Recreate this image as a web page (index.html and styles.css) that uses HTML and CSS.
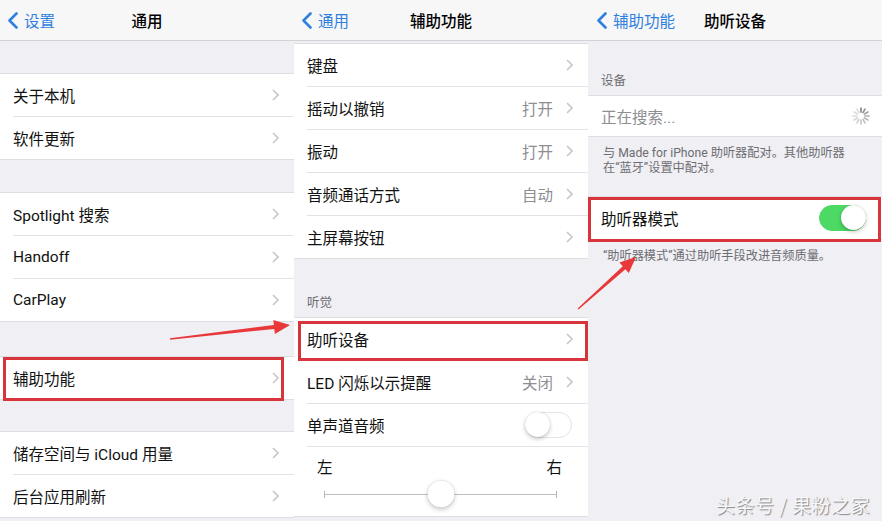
FILE: index.html
```html
<!DOCTYPE html>
<html lang="zh-CN">
<head>
<meta charset="utf-8">
<title>辅助功能</title>
<link rel="stylesheet" href="styles.css">
</head>
<body>
<div class="screen">
  <section class="panel">
    <header class="nav">
      <div class="back"><svg viewBox="0 0 11 17"><path d="M9.5 1.5 L2.5 8.5 L9.5 15.5" fill="none" stroke="#2f80de" stroke-width="2.6" stroke-linecap="round" stroke-linejoin="round"/></svg><span>设置</span></div>
      <div class="title">通用</div>
      <div></div>
    </header>
    <ul class="group mt33">
      <li class="row"><div class="cell"><span class="label">关于本机</span><svg class="chev" viewBox="0 0 7 12"><path d="M1 1 L6 6 L1 11" fill="none" stroke="#c7c7cc" stroke-width="1.6"/></svg></div></li>
      <li class="row"><div class="cell"><span class="label">软件更新</span><svg class="chev" viewBox="0 0 7 12"><path d="M1 1 L6 6 L1 11" fill="none" stroke="#c7c7cc" stroke-width="1.6"/></svg></div></li>
    </ul>
    <ul class="group mt34">
      <li class="row"><div class="cell"><span class="label">Spotlight 搜索</span><svg class="chev" viewBox="0 0 7 12"><path d="M1 1 L6 6 L1 11" fill="none" stroke="#c7c7cc" stroke-width="1.6"/></svg></div></li>
      <li class="row"><div class="cell"><span class="label">Handoff</span><svg class="chev" viewBox="0 0 7 12"><path d="M1 1 L6 6 L1 11" fill="none" stroke="#c7c7cc" stroke-width="1.6"/></svg></div></li>
      <li class="row"><div class="cell"><span class="label">CarPlay</span><svg class="chev" viewBox="0 0 7 12"><path d="M1 1 L6 6 L1 11" fill="none" stroke="#c7c7cc" stroke-width="1.6"/></svg></div></li>
    </ul>
    <ul class="group mt36">
      <li class="row hl hl-a"><div class="cell"><span class="label">辅助功能</span><svg class="chev" viewBox="0 0 7 12"><path d="M1 1 L6 6 L1 11" fill="none" stroke="#c7c7cc" stroke-width="1.6"/></svg></div></li>
    </ul>
    <ul class="group mt33">
      <li class="row"><div class="cell"><span class="label">储存空间与 iCloud 用量</span><svg class="chev" viewBox="0 0 7 12"><path d="M1 1 L6 6 L1 11" fill="none" stroke="#c7c7cc" stroke-width="1.6"/></svg></div></li>
      <li class="row"><div class="cell"><span class="label">后台应用刷新</span><svg class="chev" viewBox="0 0 7 12"><path d="M1 1 L6 6 L1 11" fill="none" stroke="#c7c7cc" stroke-width="1.6"/></svg></div></li>
    </ul>
  </section>

  <section class="panel">
    <header class="nav">
      <div class="back"><svg viewBox="0 0 11 17"><path d="M9.5 1.5 L2.5 8.5 L9.5 15.5" fill="none" stroke="#2f80de" stroke-width="2.6" stroke-linecap="round" stroke-linejoin="round"/></svg><span>通用</span></div>
      <div class="title">辅助功能</div>
      <div></div>
    </header>
    <ul class="group mt3">
      <li class="row"><div class="cell"><span class="label">键盘</span><svg class="chev" viewBox="0 0 7 12"><path d="M1 1 L6 6 L1 11" fill="none" stroke="#c7c7cc" stroke-width="1.6"/></svg></div></li>
      <li class="row"><div class="cell"><span class="label">摇动以撤销</span><span class="detail">打开</span><svg class="chev" viewBox="0 0 7 12"><path d="M1 1 L6 6 L1 11" fill="none" stroke="#c7c7cc" stroke-width="1.6"/></svg></div></li>
      <li class="row"><div class="cell"><span class="label">振动</span><span class="detail">打开</span><svg class="chev" viewBox="0 0 7 12"><path d="M1 1 L6 6 L1 11" fill="none" stroke="#c7c7cc" stroke-width="1.6"/></svg></div></li>
      <li class="row"><div class="cell"><span class="label">音频通话方式</span><span class="detail">自动</span><svg class="chev" viewBox="0 0 7 12"><path d="M1 1 L6 6 L1 11" fill="none" stroke="#c7c7cc" stroke-width="1.6"/></svg></div></li>
      <li class="row"><div class="cell"><span class="label">主屏幕按钮</span><svg class="chev" viewBox="0 0 7 12"><path d="M1 1 L6 6 L1 11" fill="none" stroke="#c7c7cc" stroke-width="1.6"/></svg></div></li>
    </ul>
    <div class="sec-head h60">听觉</div>
    <ul class="group">
      <li class="row hl hl-b"><div class="cell"><span class="label">助听设备</span><svg class="chev" viewBox="0 0 7 12"><path d="M1 1 L6 6 L1 11" fill="none" stroke="#c7c7cc" stroke-width="1.6"/></svg></div></li>
      <li class="row"><div class="cell"><span class="label">LED 闪烁以示提醒</span><span class="detail">关闭</span><svg class="chev" viewBox="0 0 7 12"><path d="M1 1 L6 6 L1 11" fill="none" stroke="#c7c7cc" stroke-width="1.6"/></svg></div></li>
      <li class="row"><div class="cell"><span class="label">单声道音频</span><span class="switch"><span class="knob"></span></span></div></li>
      <li class="slider-row">
        <div class="lr"><span>左</span><span>右</span></div>
        <div class="track"><span class="thumb"></span></div>
      </li>
    </ul>
  </section>

  <section class="panel">
    <header class="nav">
      <div class="back back3"><svg viewBox="0 0 11 17"><path d="M9.5 1.5 L2.5 8.5 L9.5 15.5" fill="none" stroke="#2f80de" stroke-width="2.6" stroke-linecap="round" stroke-linejoin="round"/></svg><span>辅助功能</span></div>
      <div class="title">助听设备</div>
      <div></div>
    </header>
    <div class="sec-head h55">设备</div>
    <ul class="group">
      <li class="row"><div class="cell short"><span class="label muted">正在搜索...</span>
        <svg class="spinner" viewBox="-10 -10 20 20">
          <g stroke-width="1.7" stroke-linecap="round">
            <line x1="0" y1="-4" x2="0" y2="-8" stroke="#8a8a8e"/>
            <line x1="0" y1="-4" x2="0" y2="-8" stroke="#959599" transform="rotate(30)"/>
            <line x1="0" y1="-4" x2="0" y2="-8" stroke="#a2a2a6" transform="rotate(60)"/>
            <line x1="0" y1="-4" x2="0" y2="-8" stroke="#adadb1" transform="rotate(90)"/>
            <line x1="0" y1="-4" x2="0" y2="-8" stroke="#b8b8bc" transform="rotate(120)"/>
            <line x1="0" y1="-4" x2="0" y2="-8" stroke="#c2c2c6" transform="rotate(150)"/>
            <line x1="0" y1="-4" x2="0" y2="-8" stroke="#cbcbcf" transform="rotate(180)"/>
            <line x1="0" y1="-4" x2="0" y2="-8" stroke="#d2d2d6" transform="rotate(210)"/>
            <line x1="0" y1="-4" x2="0" y2="-8" stroke="#d6d6da" transform="rotate(240)"/>
            <line x1="0" y1="-4" x2="0" y2="-8" stroke="#d9d9dd" transform="rotate(270)"/>
            <line x1="0" y1="-4" x2="0" y2="-8" stroke="#dcdce0" transform="rotate(300)"/>
            <line x1="0" y1="-4" x2="0" y2="-8" stroke="#dedee2" transform="rotate(330)"/>
          </g>
        </svg></div></li>
    </ul>
    <p class="foot">与 Made for iPhone 助听器配对。其他助听器<br>在“蓝牙”设置中配对。</p>
    <ul class="group mt22">
      <li class="row hl hl-c"><div class="cell"><span class="label">助听器模式</span><span class="switch on"><span class="knob"></span></span></div></li>
    </ul>
    <p class="foot">“助听器模式”通过助听手段改进音频质量。</p>
  </section>

  <svg class="arrows" viewBox="0 0 882 521">
    <polygon fill="#e8383a" points="170,339.7 274.3,328.9 274.9,333.9 290,325 273.3,319.9 273.9,324.9 170,338.3"/>
    <polygon fill="#e8383a" points="578.5,309.5 625.4,269.2 628.8,272.9 636,257 619.4,262.5 622.8,266.2 577.6,308.6"/>
  </svg>
  <div class="watermark">头条号 / 果粉之家</div>
</div>
</body>
</html>
```

FILE: styles.css
```css
*,
*::before,
*::after {
  box-sizing: border-box;
  margin: 0;
  padding: 0;
}

body {
  margin: 0;
  width: 882px;
  height: 521px;
  overflow: hidden;
  background: #efeff4;
  font-family: Roboto, "Noto Sans CJK SC", sans-serif;
}

ul {
  list-style: none;
}

.screen {
  position: relative;
  display: flex;
  width: 882px;
  height: 521px;
}

.panel {
  position: relative;
  width: 294px;
  height: 521px;
  overflow: hidden;
  background: #efeff4;
}

.nav {
  height: 41px;
  background: #f7f7f8;
  border-bottom: 1px solid #d2d2d6;
  display: grid;
  grid-template-columns: 1fr auto 1fr;
  align-items: center;
}

.back {
  display: flex;
  align-items: center;
  gap: 6px;
  padding-left: 7px;
  color: #2f80de;
  font-size: 15.5px;
  white-space: nowrap;
}

.back3 {
  padding-left: 8px;
}

.back svg {
  width: 11px;
  height: 17px;
  flex: none;
}

.title {
  font-size: 15.5px;
  font-weight: 500;
  color: #000;
}

.group {
  background: #fff;
  box-shadow: 0 -1px 0 #dedee2, 0 1px 0 #dedee2;
}

.mt3 { margin-top: 3px; }
.mt22 { margin-top: 22px; }
.mt33 { margin-top: 33px; }
.mt34 { margin-top: 34px; }
.mt36 { margin-top: 36px; }

.row {
  position: relative;
  padding-left: 13px;
}

.cell {
  height: 43px;
  display: flex;
  align-items: center;
  padding-right: 15px;
  border-bottom: 1px solid #e3e3e7;
  font-size: 15.5px;
  color: #111;
}

.row:last-child .cell {
  border-bottom: none;
  height: 42px;
}

.row:last-child .cell.short {
  height: 40px;
}

.label {
  flex: 1;
  white-space: nowrap;
}

.muted {
  color: #8e8e93;
}

.detail {
  color: #8e8e93;
  margin-right: 13px;
}

.chev {
  width: 7px;
  height: 12px;
  flex: none;
}

.sec-head {
  display: flex;
  align-items: flex-end;
  padding: 0 0 7px 13px;
  font-size: 12.5px;
  line-height: 16px;
  color: #6d6d72;
}

.h55 { height: 55px; }
.h60 { height: 60px; }

.foot {
  padding: 10px 13px 0 15px;
  font-size: 12.2px;
  line-height: 14.5px;
  color: #6d6d72;
}

.switch {
  position: relative;
  width: 47px;
  height: 26px;
  border-radius: 13px;
  background: #fff;
  border: 1.5px solid #e4e4e8;
  flex: none;
  margin-right: 1px;
}

.switch .knob {
  position: absolute;
  top: -1px;
  left: -1px;
  width: 25px;
  height: 25px;
  border-radius: 50%;
  background: #fff;
  box-shadow: 0 2px 4px rgba(0, 0, 0, 0.22), 0 0 1px rgba(0, 0, 0, 0.2);
}

.switch.on {
  background: #4cd964;
  border-color: #4cd964;
}

.switch.on .knob {
  left: auto;
  right: -1px;
}

.spinner {
  width: 20px;
  height: 20px;
  margin-right: -4px;
  flex: none;
}

.slider-row {
  height: 69px;
  padding: 12px 26px 0 23px;
  font-size: 15.5px;
  color: #111;
}

.lr {
  display: flex;
  justify-content: space-between;
  line-height: 18px;
}

.track {
  position: relative;
  margin: 17px 5px 0 7px;
  height: 1px;
  background: #bdbdc2;
}

.track::before,
.track::after {
  content: "";
  position: absolute;
  top: -3px;
  width: 1px;
  height: 7px;
  background: #b5b5ba;
}

.track::before { left: 0; }
.track::after { right: 0; }

.thumb {
  position: absolute;
  left: 50%;
  top: 0;
  width: 27px;
  height: 27px;
  border-radius: 50%;
  background: #fff;
  transform: translate(-50%, -50%);
  box-shadow: 0 2px 5px rgba(0, 0, 0, 0.22), 0 0 1px rgba(0, 0, 0, 0.25);
}

.hl::after {
  content: "";
  position: absolute;
  border: 3px solid #d8343c;
  pointer-events: none;
}

.hl-a::after {
  top: 0;
  left: 3px;
  width: 281px;
  height: 44px;
}

.hl-b::after {
  top: 3px;
  left: 4px;
  right: 0;
  height: 40px;
}

.hl-c::after {
  top: 0;
  left: 0;
  width: 293px;
  height: 45px;
}

.arrows {
  position: absolute;
  left: 0;
  top: 0;
  width: 882px;
  height: 521px;
  pointer-events: none;
}

.watermark {
  position: absolute;
  right: 12px;
  bottom: 4px;
  font-family: "Noto Sans CJK SC", sans-serif;
  font-size: 19px;
  line-height: 24px;
  color: #f7f7f9;
  text-shadow: 1px 1px 1px rgba(0, 0, 0, 0.45);
  letter-spacing: 0.5px;
}
```
